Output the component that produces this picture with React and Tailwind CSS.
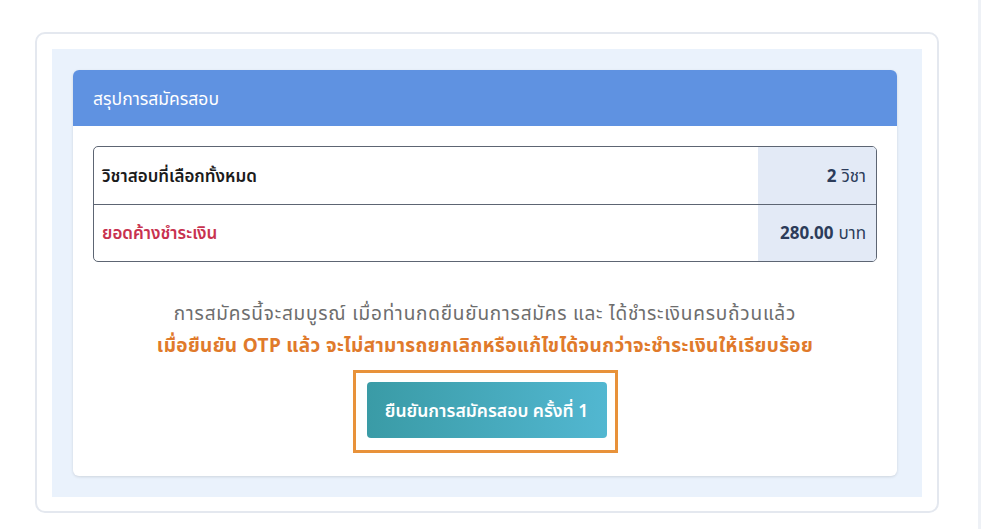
import React from 'react';

// สรุปการสมัครสอบ - หน้าตรวจสอบก่อนยืนยัน
const summaryRows = [
  { label: 'วิชาสอบที่เลือกทั้งหมด', value: '2', unit: 'วิชา', labelClass: 'text-[#1b1b1b]' },
  { label: 'ยอดค้างชำระเงิน', value: '280.00', unit: 'บาท', labelClass: 'text-[#c8324f]' },
];

const App = () => {
  return (
    <div
      className="flex w-[981px] h-[529px] bg-white overflow-hidden"
      style={{ fontFamily: '"Noto Sans", "Noto Sans Thai", "Liberation Sans", sans-serif' }}
    >
      <div className="flex-1 pl-[35px] pt-[32px]">
        {/* กรอบนอก */}
        <div className="w-[904px] rounded-[10px] border-2 border-[#e4e8ef] bg-white px-[15px] pt-[15px] pb-[14px]">
          <div className="bg-[#eaf2fc] pl-[21px] pt-[21px] pb-[21px]">
            {/* การ์ดสรุป */}
            <div className="w-[824px] rounded-[6px] bg-white shadow-[0_1px_3px_rgba(0,0,0,0.12)] overflow-hidden">
              <div className="h-[56px] bg-[#5f92e1] px-[20px] flex items-center text-white text-[17.5px]">
                สรุปการสมัครสอบ
              </div>

              <div className="px-[20px] pt-[20px] pb-[23px]">
                {/* ตารางสรุป */}
                <div className="rounded-[5px] border border-[#5d6573] overflow-hidden">
                  {summaryRows.map((row, i) => (
                    <div
                      key={row.label}
                      className={`flex h-[57px] ${i > 0 ? 'border-t border-[#5d6573]' : ''}`}
                    >
                      <div className={`flex-1 flex items-center pl-[8px] text-[17px] font-semibold ${row.labelClass}`}>
                        {row.label}
                      </div>
                      <div className="w-[118px] bg-[#e3eaf6] flex items-center justify-end pr-[10px] text-[17px] text-[#2c3c5a]">
                        <span className="font-bold">{row.value}</span>
                        <span className="ml-[5px]">{row.unit}</span>
                      </div>
                    </div>
                  ))}
                </div>

                {/* ข้อความแจ้งเตือน */}
                <div className="mt-[35px] text-center leading-[32px]">
                  <p className="text-[#6d6d6d] text-[19px] tracking-[0.8px]">
                    การสมัครนี้จะสมบูรณ์ เมื่อท่านกดยืนยันการสมัคร และ ได้ชำระเงินครบถ้วนแล้ว
                  </p>
                  <p className="text-[#e07a2b] text-[19px] font-bold tracking-[0.35px]">
                    เมื่อยืนยัน OTP แล้ว จะไม่สามารถยกเลิกหรือแก้ไขได้จนกว่าจะชำระเงินให้เรียบร้อย
                  </p>
                </div>

                {/* ปุ่มยืนยัน */}
                <div className="mt-[9px] flex justify-center">
                  <div className="border-[3px] border-[#e8923a] pl-[11px] pr-[8px] pt-[9px] pb-[12px]">
                    <button className="w-[240px] h-[56px] rounded-[4px] bg-gradient-to-r from-[#3a9ba6] to-[#52b7d1] text-white text-[17.5px] font-semibold">
                      ยืนยันการสมัครสอบ ครั้งที่ 1
                    </button>
                  </div>
                </div>
              </div>
            </div>
          </div>
        </div>
      </div>
      {/* เส้นขอบขวา */}
      <div className="w-[3px] h-full bg-[#eef1f6]" />
    </div>
  );
};

export default App;
